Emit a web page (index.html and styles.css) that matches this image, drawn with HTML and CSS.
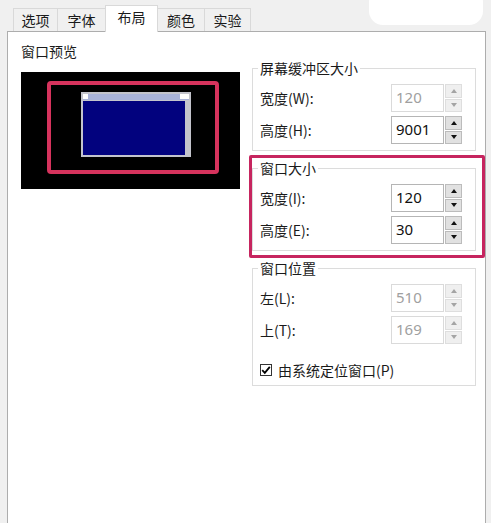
FILE: index.html
```html
<!DOCTYPE html>
<html lang="zh-CN">
<head>
<meta charset="utf-8">
<title>布局</title>
<link rel="stylesheet" href="styles.css">
</head>
<body>
<div class="tabs">
  <div class="tab t1">选项</div>
  <div class="tab t2">字体</div>
  <div class="tab t3 active">布局</div>
  <div class="tab t4">颜色</div>
  <div class="tab t5">实验</div>
  <div class="blob"></div>
</div>
<div class="panel">
  <div class="left">
    <div class="label-top">窗口预览</div>
    <div class="preview">
      <div class="win">
        <div class="win-title"><span class="wbox"></span><span class="wbox wide"></span></div>
        <div class="win-body"><div class="win-client"></div><div class="win-scroll"></div></div>
      </div>
      <div class="red-frame"></div>
    </div>
  </div>
  <div class="right">
    <fieldset class="group">
      <legend>屏幕缓冲区大小</legend>
      <div class="rows">
        <div class="row">
          <span class="lbl">宽度(W):</span>
          <div class="num disabled">120</div>
          <div class="spin disabled"><span class="sb"><i class="up"></i></span><span class="sb"><i class="down"></i></span></div>
        </div>
        <div class="row">
          <span class="lbl">高度(H):</span>
          <div class="num">9001</div>
          <div class="spin"><span class="sb"><i class="up"></i></span><span class="sb"><i class="down"></i></span></div>
        </div>
      </div>
    </fieldset>
    <div class="mark-wrap">
      <fieldset class="group">
        <legend>窗口大小</legend>
        <div class="rows">
          <div class="row">
            <span class="lbl">宽度(I):</span>
            <div class="num">120</div>
            <div class="spin"><span class="sb"><i class="up"></i></span><span class="sb"><i class="down"></i></span></div>
          </div>
          <div class="row">
            <span class="lbl">高度(E):</span>
            <div class="num">30</div>
            <div class="spin"><span class="sb"><i class="up"></i></span><span class="sb"><i class="down"></i></span></div>
          </div>
        </div>
      </fieldset>
      <div class="mag-frame"></div>
    </div>
    <fieldset class="group last">
      <legend>窗口位置</legend>
      <div class="rows">
        <div class="row">
          <span class="lbl">左(L):</span>
          <div class="num disabled">510</div>
          <div class="spin disabled"><span class="sb"><i class="up"></i></span><span class="sb"><i class="down"></i></span></div>
        </div>
        <div class="row">
          <span class="lbl">上(T):</span>
          <div class="num disabled">169</div>
          <div class="spin disabled"><span class="sb"><i class="up"></i></span><span class="sb"><i class="down"></i></span></div>
        </div>
        <div class="check-row">
          <span class="cbox"><svg width="10" height="10" viewBox="0 0 10 10"><path d="M1.2 5.2 L3.8 7.8 L8.8 1.8" fill="none" stroke="#000" stroke-width="1.8"/></svg></span>
          <span class="clbl">由系统定位窗口(P)</span>
        </div>
      </div>
    </fieldset>
  </div>
</div>
</body>
</html>
```

FILE: styles.css
```css
* { box-sizing: border-box; }
html, body { margin: 0; padding: 0; }
body {
  width: 491px;
  height: 523px;
  overflow: hidden;
  background: #f0f0f0;
  font-family: "Noto Sans CJK SC", "Noto Sans", sans-serif;
  font-size: 14px;
  color: #1a1a1a;
}
.tabs {
  position: relative;
  z-index: 2;
  display: flex;
  align-items: flex-end;
  height: 31px;
  padding-left: 13px;
}
.tab {
  height: 23px;
  border: 1px solid #d9d9d9;
  border-bottom: none;
  margin-left: -1px;
  background: #f0f0f0;
  display: flex;
  align-items: center;
  justify-content: center;
  font-size: 14px;
  line-height: 16px;
  padding-bottom: 1px;
  color: #1a1a1a;
}
.t1 { width: 45px; margin-left: 0; }
.t2 { width: 49px; }
.t3 { width: 53px; }
.t4 { width: 48px; }
.t5 { width: 47px; }
.tab.active {
  height: 27px;
  background: #fff;
  margin-bottom: -1px;
  padding-bottom: 4px;
}
.blob {
  position: absolute;
  left: 369px;
  top: -12px;
  width: 114px;
  height: 37px;
  background: #fff;
  border-radius: 14px;
}
.panel {
  position: relative;
  z-index: 1;
  margin-left: 7px;
  width: 479px;
  height: 500px;
  background: #fff;
  border: 1px solid #adadad;
  display: flex;
  gap: 12px;
  padding: 10px 9px 0 13px;
}
.left { width: 219px; flex: none; }
.label-top {
  line-height: 19px;
  height: 19px;
  margin-bottom: 11px;
}
.preview {
  position: relative;
  width: 219px;
  height: 117px;
  background: #000;
}
.win {
  position: absolute;
  left: 60px;
  top: 20px;
  width: 110px;
  height: 65px;
  border: 2px solid #c3c4cc;
  background: #c3c4cc;
  display: flex;
  flex-direction: column;
}
.win-title {
  height: 6px;
  background: #a9b3d9;
  display: flex;
  justify-content: space-between;
  margin-bottom: 1px;
}
.wbox { width: 5px; height: 5px; background: #fff; }
.wbox.wide { width: 9px; }
.win-body { flex: 1; display: flex; }
.win-client { flex: 1; background: #02027e; }
.win-scroll { width: 4px; background: #c3c4cc; }
.red-frame {
  position: absolute;
  left: 26px;
  top: 9px;
  width: 172px;
  height: 93px;
  border: 4px solid #d6335d;
  border-radius: 4px;
}
.right {
  width: 224px;
  flex: none;
  margin-top: 18px;
  display: flex;
  flex-direction: column;
  gap: 9px;
}
.group {
  margin: 0;
  border: 1px solid #dcdcdc;
  padding: 8px 13px 6px 7px;
  min-width: 0;
}
.group.last { padding-bottom: 5px; }
.group legend {
  padding: 0 2px;
  margin-left: -2px;
  line-height: 16px;
  font-size: 14px;
  color: #1a1a1a;
}
.rows { display: flex; flex-direction: column; gap: 4px; }
.row { display: flex; align-items: center; height: 28px; }
.lbl { flex: 1; line-height: 18px; }
.num {
  width: 53px;
  height: 28px;
  border: 1px solid #b5b5b5;
  font-family: "Noto Sans", sans-serif;
  font-size: 15px;
  line-height: 25px;
  padding-left: 4px;
  color: #111;
  background: #fff;
}
.num.disabled { border-color: #dadada; color: #a0a0a0; }
.spin {
  width: 17px;
  height: 28px;
  margin-left: 1px;
  display: flex;
  flex-direction: column;
  gap: 1px;
}
.sb {
  flex: 1;
  background: #e1e1e1;
  border: 1px solid #bcbcbc;
  display: flex;
  align-items: center;
  justify-content: center;
}
.spin.disabled .sb { background: #efefef; border-color: #dedede; }
.up, .down {
  width: 0; height: 0;
  border-left: 3.5px solid transparent;
  border-right: 3.5px solid transparent;
}
.up { border-bottom: 4px solid #111; }
.down { border-top: 4px solid #111; }
.spin.disabled .up { border-bottom-color: #a4a4a4; }
.spin.disabled .down { border-top-color: #a4a4a4; }
.check-row {
  display: flex;
  align-items: center;
  height: 20px;
  margin-top: 12px;
}
.cbox {
  width: 12px;
  height: 12px;
  border: 1px solid #333;
  display: flex;
  align-items: center;
  justify-content: center;
  margin-right: 6px;
  background: #fff;
}
.clbl { line-height: 18px; }
.mark-wrap { position: relative; }
.mag-frame {
  position: absolute;
  left: -3px;
  top: -5px;
  right: -9px;
  bottom: -7px;
  border: 3px solid #c6255f;
  border-radius: 2px;
}
```
